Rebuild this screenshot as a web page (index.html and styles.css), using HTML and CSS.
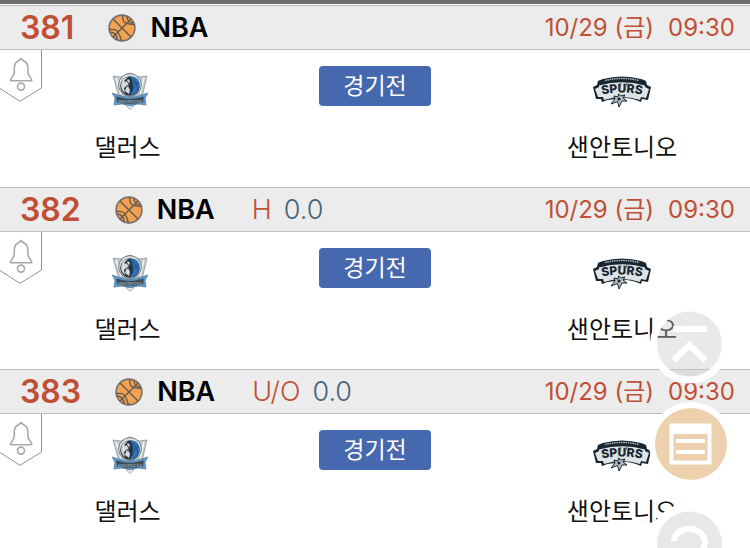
FILE: index.html
```html
<!DOCTYPE html>
<html lang="ko">
<head>
<meta charset="utf-8">
<title>NBA 경기</title>
<meta name="viewport" content="width=device-width">
<link rel="stylesheet" href="styles.css">
</head>
<body>
<svg class="defs" aria-hidden="true">
  <symbol id="ball" viewBox="0 0 28 28">
    <circle cx="14" cy="14" r="12.9" fill="#f2a250" stroke="#77726b" stroke-width="1.6"/>
    <g fill="none" stroke="#5e5850" stroke-width="1.3">
      <path d="M5 5L23 23M23 5L5 23M14.500 1Q14.500 9 19 9.500T27 11M1 15.500Q8 14.500 10 18T13.500 27M19 2.500Q19 8 25 9M2.500 18Q9 19 9 26"/>
    </g>
  </symbol>
  <symbol id="bell" viewBox="0 0 42 52">
    <path d="M0 0H41.500V38L20 51.300L0 38.500" fill="#fff"/>
    <path d="M41.500 0V38L20 51.300L0 38.500" fill="none" stroke="#939393"/>
    <g fill="none" stroke="#a8a8a8" stroke-width="1.600" stroke-linejoin="round">
      <path d="M21 8.500C20 10 19 10.300 18 11C15.500 12.300 14.300 14.500 14.300 18V22C14.300 26 10.500 27.500 10.500 30.700H31.800C31.800 27.500 27.900 26 27.900 22V18C27.900 14.500 26.500 12.300 24 11C23 10.300 22 10 21 8.500Z"/>
      <circle cx="21" cy="36.600" r="3.500"/>
    </g>
  </symbol>
  <symbol id="mavs" viewBox="0 0 36 38">
    <path d="M1 4L9 5L18 1L27 5L35 4L30 25L18 37L7 25Z" fill="#c3c8ca" stroke="#868d91" stroke-width=".7"/>
    <path d="M4 6L9 22M32 6L28 22" stroke="#f4f6f7" stroke-width="1.500"/>
    <circle cx="18" cy="13" r="11.400" fill="#dfe3e5" stroke="#737b80"/>
    <circle cx="18" cy="14" r="9.800" fill="#263644"/>
    <path d="M18 4.500C25 4 28 9 27.500 14C27 19 23 23 18 23.500C22 17 22 10 18 4.500Z" fill="#2e72b8"/>
    <path d="M19 6Q25 10 26 18M27 10Q22 12 20 20" fill="none" stroke="#174675" stroke-width=".8"/>
    <path d="M16 5Q9 6 9 14Q10 19 13 21L12 16L15 13L13 19L17 22L18 18L16 14L18 9L16 7L14 10L12 9Z" fill="#d7dbdd"/>
    <path d="M15 9L17 12L15 15" fill="none" stroke="#4e5a63" stroke-width="1.200"/>
    <path d="M0 21L8 23.500Q18 27 28 23.500L36 21L33 26L34 33L26 32Q18 35 10 32L2 33L3 26Z" fill="#5b9cd6" stroke="#51738f" stroke-width=".7"/>
    <path d="M4 24.500L9 25.500Q18 28 27 25.500L32 24.500L31 30.500Q18 33 5 30.500Z" fill="#3d4c57"/>
    <text x="18" y="30.500" text-anchor="middle" font-size="4" font-weight="700" fill="#8d989f">MAVERICKS</text>
    <path d="M14 34L18 37.500L22 34" fill="#e1e4e6" stroke="#a5abae" stroke-width=".7"/>
  </symbol>
  <symbol id="spurs" viewBox="0 0 60 32">
    <path d="M6 5Q8 4 11 3Q30-2 49 3Q52 4 54 5L55 9L59 11L56 24L50 23L49 26Q40 22 33 22L28 24Q18 22 10 26L9 23L4 23L1 11L5 9Z" fill="#172631"/>
    <path d="M7 9.500Q30 3 53 9.500L53 11L57 13L54 22L49 21L48 24Q30 18 12 24L11 21L6 21L3 13L7 11Z" fill="#dfe3e5"/>
    <path d="M13 4.500Q30 .5 47 4.500" fill="none" stroke="#b7bec3" stroke-width="1.400" stroke-dasharray="1.500 .8"/>
    <path d="M22 20L26 21L26.500 18L29 20L33 19L31 22L35 25L30 25L27 31L25.500 25.500L19 28L23 23Z" fill="#b9c1c6" stroke="#172631"/>
    <circle cx="27" cy="23" r="1.600" fill="#172631"/>
    <path id="arc-name" d="M4 20Q30 13 56 20" fill="none"/>
    <text class="spurs-name" text-anchor="middle"><textPath href="#arc-name" startOffset="50%">SPURS</textPath></text>
    <path d="M28 12L29 7M33 12L35 7" fill="none" stroke="#56656f" stroke-width="1.200"/>
  </symbol>
</svg>

<main class="games">
  <article class="game">
    <header class="game-head">
      <span class="number">381</span><svg class="ball"><use href="#ball"/></svg><strong class="league">NBA</strong>
      <time class="date"><span>10/29 (금)</span><span>09:30</span></time>
    </header>
    <div class="match">
      <button class="alarm" aria-label="알림"><svg><use href="#bell"/></svg></button>
      <div class="team home"><svg class="mavs"><use href="#mavs"/></svg><span class="name">댈러스</span></div>
      <button class="status">경기전</button>
      <div class="team away"><svg class="spurs"><use href="#spurs"/></svg><span class="name">샌안토니오</span></div>
    </div>
  </article>
  <article class="game">
    <header class="game-head">
      <span class="number">382</span><svg class="ball"><use href="#ball"/></svg><strong class="league">NBA</strong>
      <span class="kind">H</span><span class="line">0.0</span>
      <time class="date"><span>10/29 (금)</span><span>09:30</span></time>
    </header>
    <div class="match">
      <button class="alarm" aria-label="알림"><svg><use href="#bell"/></svg></button>
      <div class="team home"><svg class="mavs"><use href="#mavs"/></svg><span class="name">댈러스</span></div>
      <button class="status">경기전</button>
      <div class="team away"><svg class="spurs"><use href="#spurs"/></svg><span class="name">샌안토니오</span></div>
    </div>
  </article>
  <article class="game">
    <header class="game-head">
      <span class="number">383</span><svg class="ball"><use href="#ball"/></svg><strong class="league">NBA</strong>
      <span class="kind">U/O</span><span class="line">0.0</span>
      <time class="date"><span>10/29 (금)</span><span>09:30</span></time>
    </header>
    <div class="match">
      <button class="alarm" aria-label="알림"><svg><use href="#bell"/></svg></button>
      <div class="team home"><svg class="mavs"><use href="#mavs"/></svg><span class="name">댈러스</span></div>
      <button class="status">경기전</button>
      <div class="team away"><svg class="spurs"><use href="#spurs"/></svg><span class="name">샌안토니오</span></div>
    </div>
  </article>
</main>

<nav class="floating">
  <button class="fab" aria-label="맨 위로">
    <svg viewBox="0 0 84 84">
      <circle cx="40.500" cy="42" r="36" fill="none" stroke="#fff" stroke-width="7"/>
      <circle cx="40.500" cy="42" r="32.500" fill="#c8c8c8" fill-opacity=".4"/>
      <path d="M24 27H58M24.500 58.500L40.500 43L56.500 58.500" fill="none" stroke="#fff" stroke-width="6"/>
    </svg>
  </button>
  <button class="fab" aria-label="목록">
    <svg viewBox="0 0 84 84">
      <circle cx="42" cy="42" r="42" fill="#fff"/>
      <circle cx="42" cy="42" r="36" fill="#edd1ae"/>
      <path d="M22.500 23.500H60.500V60.500H22.500Z" fill="none" stroke="#fff" stroke-width="4"/>
      <path d="M27 39H56M27 50H56" fill="none" stroke="#fff" stroke-width="4"/>
      <path d="M22 28H61" stroke="#fff" stroke-width="8"/>
    </svg>
  </button>
  <button class="fab" aria-label="새로고침">
    <svg viewBox="0 0 84 84">
      <circle cx="40.500" cy="42" r="36" fill="none" stroke="#fff" stroke-width="10"/>
      <circle cx="40.500" cy="42" r="32.500" fill="#e8e8e8"/>
      <path d="M24.500 39A16 15 0 0 1 56 39Q57 45 50 50" fill="none" stroke="#fff" stroke-width="6"/>
    </svg>
  </button>
</nav>
</body>
</html>
```
FILE: styles.css
```css
* {
  box-sizing: border-box;
}

body {
  margin: 0;
  border-top: 4px solid #6e6e6e;
  background: #fff;
  color: #111;
  font-family: Inter, "Noto Sans CJK KR", sans-serif;
}

button {
  margin: 0;
  padding: 0;
  border: 0;
  background: none;
  font-family: inherit;
}

svg {
  display: block;
}

.defs {
  position: absolute;
  width: 0;
  height: 0;
}

.games {
  padding-top: 1px;
}

.game-head {
  display: flex;
  align-items: center;
  height: 45px;
  padding: 0 15px 0 20px;
  border-top: 1px solid #bdbdbd;
  border-bottom: 1px solid #bdbdbd;
  background: #ececec;
  font-size: 27px;
  line-height: 43px;
}

.number {
  color: #c05035;
  font-size: 32px;
  font-weight: 600;
}

.ball {
  width: 28px;
  height: 28px;
  margin: 0 14px 0 34px;
}

.league {
  margin-right: 37px;
  color: #000;
  font-weight: 600;
}

.kind {
  margin-right: 12px;
  color: #c05035;
  font-weight: 300;
}

.line {
  color: #456478;
  font-weight: 300;
}

.date {
  display: flex;
  gap: 14px;
  margin-left: auto;
  color: #c05035;
  font-size: 24px;
}

.match {
  position: relative;
  display: grid;
  grid-template-columns: 255px 1fr 255px;
  justify-items: center;
  align-items: start;
  height: 137px;
  padding-top: 16px;
}

.game:last-child .match {
  height: 134px;
}

.alarm {
  position: absolute;
  top: 0;
  left: 0;
}

.alarm svg {
  width: 42px;
  height: 52px;
}

.team {
  display: grid;
  grid-template-rows: 62px 40px;
  justify-items: center;
  width: 255px;
}

.mavs {
  width: 36px;
  height: 38px;
  margin: 6px 0 0 4px;
}

.spurs {
  width: 60px;
  height: 32px;
  margin-top: 10px;
}

.spurs-name {
  fill: #172631;
  font-size: 12px;
  font-weight: 800;
}

.away {
  padding-right: 1px;
}

.name {
  font-size: 24px;
  line-height: 40px;
}

.status {
  width: 112px;
  height: 40px;
  border-radius: 4px;
  background: #4668ae;
  color: #fff;
  font-size: 23px;
  line-height: 40px;
}

.floating {
  position: fixed;
  top: 302px;
  right: 17px;
  display: flex;
  flex-direction: column;
  gap: 16px;
}

.fab {
  width: 84px;
  height: 84px;
}
```
